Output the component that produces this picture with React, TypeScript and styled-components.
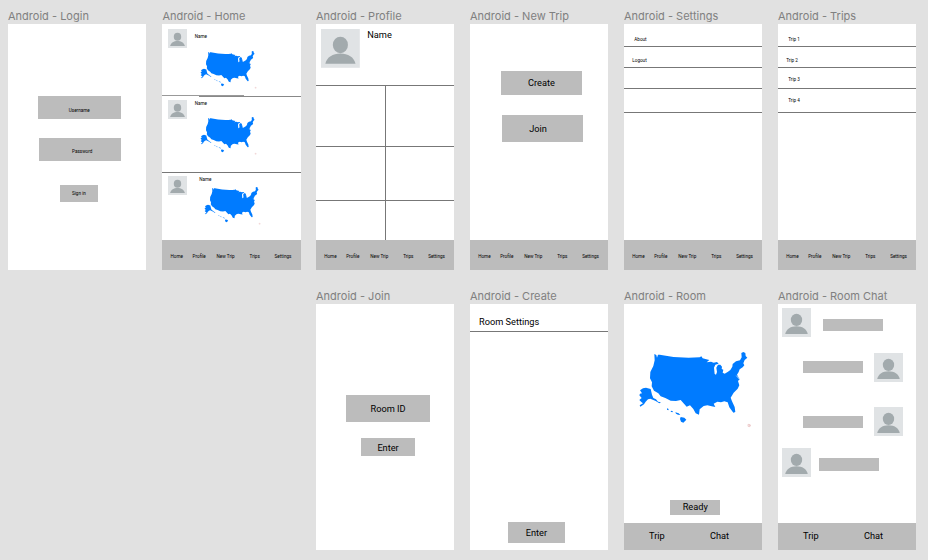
import React from "react";
import styled, { createGlobalStyle } from "styled-components";

const GlobalStyle = createGlobalStyle`
  * { box-sizing: border-box; }
  body { margin: 0; background: #e1e1e1; overflow: hidden; }
`;

const Canvas = styled.main`
  width: 928px;
  height: 560px;
  padding: 9px 0 0 8px;
  display: grid;
  grid-template-columns: 154.4px 153.6px repeat(4, 154px);
  grid-template-rows: 280px 271px;
  background: #e1e1e1;
  font-family: Roboto, "Liberation Sans", sans-serif;
  color: #000;
  overflow: hidden;
`;

const Artboard = styled.section<{ $column: number; $row: number }>`
  grid-column: ${(p) => p.$column};
  grid-row: ${(p) => p.$row};
  width: 138.4px;
`;

const Title = styled.h2`
  margin: 0;
  height: 15px;
  font: 400 11px/15px Inter, sans-serif;
  letter-spacing: 0.01px;
  color: #808080;
  white-space: nowrap;
`;

const Screen = styled.div`
  height: 246px;
  display: flex;
  flex-direction: column;
  background: #fff;
  overflow: hidden;
`;

const Body = styled.div`
  flex: 1;
  min-height: 0;
  display: flex;
  flex-direction: column;
  align-items: flex-start;
`;

const Box = styled.div<{ $w: number; $h: number; $left: number; $gap: number; $textLeft: number; $textTop: number; $small?: boolean }>`
  flex: none;
  width: ${(p) => p.$w}px;
  height: ${(p) => p.$h}px;
  margin: ${(p) => p.$gap}px 0 0 ${(p) => p.$left}px;
  padding: ${(p) => p.$textTop}px 0 0 ${(p) => p.$textLeft}px;
  background: #bcbcbc;
  font-size: ${(p) => (p.$small ? 4.62 : 9.23)}px;
  line-height: ${(p) => (p.$small ? 6 : 12)}px;
  white-space: nowrap;
`;

const TabBar = styled.nav`
  flex: none;
  height: 30px;
  padding: 3.5px 0 0 8.2px;
  display: grid;
  grid-template-columns: 22px 24px 33px 25px auto;
  align-items: center;
  background: #bcbcbc;
  font-size: 4.62px;
  line-height: 6px;
  white-space: nowrap;
`;

const RoomBar = styled.nav`
  flex: none;
  height: 27.5px;
  padding-left: 25px;
  display: grid;
  grid-template-columns: 61px auto;
  align-items: center;
  background: #bcbcbc;
  font-size: 9.23px;
  line-height: 12px;
`;

const AvatarFrame = styled.svg<{ $size: number }>`
  flex: none;
  display: block;
  width: ${(p) => p.$size}px;
  height: ${(p) => p.$size}px;
`;

const straightRule = "linear-gradient(#777, #777) 0 100% / 100% 1px no-repeat";
const tiltedRule =
  "linear-gradient(#888, #888) 100% 100% / 102px 1px no-repeat, linear-gradient(#999, #999) 0 calc(100% - 1px) / 82px 1px no-repeat";

const Post = styled.article<{ $h: number; $top: number; $rule?: string }>`
  width: 100%;
  height: ${(p) => p.$h}px;
  padding: ${(p) => p.$top}px 0 0 5.6px;
  display: flex;
  align-items: flex-start;
  background: ${(p) => p.$rule ?? "none"};
`;

const PostContent = styled.div<{ $left: number; $top: number }>`
  padding: ${(p) => p.$top}px 0 0 ${(p) => p.$left}px;
  font-size: 4.62px;
  line-height: 6px;
`;

const MapDrawing = styled.svg<{ $w: number; $left?: number; $top?: number }>`
  display: block;
  flex: none;
  width: ${(p) => p.$w}px;
  height: ${(p) => (p.$w * 240) / 345}px;
  margin: ${(p) => p.$top ?? 0}px 0 0 ${(p) => p.$left ?? 0}px;
`;

const ProfileHeader = styled.header`
  height: 61px;
  padding: 5px 0 0 5.3px;
  display: flex;
  gap: 7.2px;
  font-size: 9.23px;
  line-height: 12px;
`;

const Gallery = styled.div`
  width: 100%;
  flex: 1;
  display: grid;
  grid-template-columns: 70px 1fr;
  grid-template-rows: 61px 54px 1fr;
`;

const Photo = styled.div`
  border-top: 1px solid #777;
  &:nth-child(odd) { border-right: 1px solid #777; }
`;

const ListRow = styled.div<{ $h: number; $left: number; $top: number }>`
  width: 100%;
  height: ${(p) => p.$h}px;
  padding: ${(p) => p.$top}px 0 0 ${(p) => p.$left}px;
  border-bottom: 1px solid #777;
  font-size: 4.62px;
  line-height: 6px;
`;

const RoomHeading = styled.header`
  width: 100%;
  height: 28px;
  padding: 12px 0 0 9px;
  border-bottom: 1px solid #777;
  font-size: 9.23px;
  line-height: 12px;
`;

const Message = styled.div<{ $own?: boolean; $gap: number; $left: number; $space: number; $barTop: number }>`
  display: flex;
  flex-direction: ${(p) => (p.$own ? "row-reverse" : "row")};
  gap: ${(p) => p.$space}px;
  margin: ${(p) => p.$gap}px 0 0 ${(p) => p.$left}px;
  > div { margin-top: ${(p) => p.$barTop}px; }
`;

const MessageBar = styled.div`
  width: 60px;
  height: 12.2px;
  background: #bcbcbc;
`;

function Avatar({ size }: { size: number }) {
  return (
    <AvatarFrame $size={size} viewBox="0 0 117 117">
      <rect width="117" height="117" fill="#e0e3e5" />
      <ellipse cx="58.5" cy="48" rx="22.8" ry="25" fill="#a2aaad" />
      <path d="M13 105C17 85 36 74 58.5 74S100 85 104 105Z" fill="#a2aaad" />
    </AvatarFrame>
  );
}

function UsaMap({ w, left, top }: { w: number; left?: number; top?: number }) {
  return (
    <MapDrawing $w={w} $left={left} $top={top} viewBox="60 60 345 240">
      <g fill="#007bff">
        <path d="M109 72L115 75L117 83L120 74L125 74Q185 87 245 82L250 79L254 85L265 88L274 90L266 97L279 95L287 98L297 96L302 101L292 104L288 113L290 132L294 134L297 126L295 113L300 104L307 104L312 110L311 117L316 119L314 128L320 131L330 125L337 120L343 110L344 102L354 94L366 91L371 82L370 69L376 66L382 69L383 78L388 83L380 90L376 100L379 106L374 112L365 118L362 126L357 134L365 148L360 153L364 166L359 176L347 188L338 203L342 214L350 231L352 246L346 248L334 232L329 217L319 214L309 217L298 215L287 221L292 231L281 229L268 226L257 228L245 238L243 254L233 250L226 237L216 226L206 230L198 221L188 210L174 213L158 212L142 204L128 199L121 190L108 182L101 169L102 157L96 145L97 126L106 108L110 91Z" />
        <path d="M75 175L84 173L98 177L102 194L106 204L114 208L120 215L129 217L124 220L113 213L106 210L97 206L90 208L83 215L78 223L67 230L65 226L75 220L70 216L64 210L71 204L64 196L66 191L72 190L66 181Z" />
        <path d="M147 235L152 237L151 241L147 239ZM159 242L165 244L163 247L158 245ZM172 247L182 250L187 255L180 254L174 251ZM188 261L199 263L205 269L196 278L189 275L186 267Z" />
      </g>
      <path d="M355 137l9 10" stroke="#fff" strokeWidth="2" />
      <path d="M390 283l6 1v6l-6-1zM392 286h7" fill="none" stroke="#e8bcbc" strokeWidth="2" />
    </MapDrawing>
  );
}

const tabs = ["Home", "Profile", "New Trip", "Trips", "Settings"];
const Tabs = () => <TabBar>{tabs.map((t) => <span key={t}>{t}</span>)}</TabBar>;
const RoomTabs = () => <RoomBar><span>Trip</span><span>Chat</span></RoomBar>;

function Board({ name, column, row = 1, children, footer }: {
  name: string; column: number; row?: number; children: React.ReactNode; footer?: React.ReactNode;
}) {
  return (
    <Artboard $column={column} $row={row}>
      <Title>Android - {name}</Title>
      <Screen><Body>{children}</Body>{footer}</Screen>
    </Artboard>
  );
}

export default function App() {
  return (
    <>
      <GlobalStyle />
      <Canvas>
        <Board name="Login" column={1}>
          <Box $small $w={83.2} $h={23} $left={29.6} $gap={72} $textLeft={31.2} $textTop={12}>Username</Box>
          <Box $small $w={82} $h={23.3} $left={31} $gap={18.6} $textLeft={33} $textTop={11}>Password</Box>
          <Box $small $w={38.4} $h={16.7} $left={52} $gap={24.1} $textLeft={12} $textTop={6.3}>Sign in</Box>
        </Board>

        <Board name="Home" column={2} footer={<Tabs />}>
          <Post $h={73} $top={5} $rule={tiltedRule}>
            <Avatar size={19} />
            <PostContent $left={7.8} $top={4.5}>Name<UsaMap w={57.5} left={5.5} top={10.5} /></PostContent>
          </Post>
          <Post $h={76} $top={3} $rule={straightRule}>
            <Avatar size={19} />
            <PostContent $left={7.8} $top={1}>Name<UsaMap w={57.5} left={5.5} top={9} /></PostContent>
          </Post>
          <Post $h={67} $top={3}>
            <Avatar size={19} />
            <PostContent $left={12.3} $top={1}>Name<UsaMap w={57.5} left={4.9} top={3} /></PostContent>
          </Post>
        </Board>

        <Board name="Profile" column={3} footer={<Tabs />}>
          <ProfileHeader><Avatar size={38.8} /><span>Name</span></ProfileHeader>
          <Gallery>{[1, 2, 3, 4, 5, 6].map((n) => <Photo key={n} />)}</Gallery>
        </Board>

        <Board name="New Trip" column={4} footer={<Tabs />}>
          <Box $w={81.6} $h={24.2} $left={30.8} $gap={46.5} $textLeft={27.2} $textTop={6.3}>Create</Box>
          <Box $w={81.4} $h={27.5} $left={32} $gap={20.3} $textLeft={27.2} $textTop={8}>Join</Box>
        </Board>

        <Board name="Settings" column={5} footer={<Tabs />}>
          <ListRow $h={23} $left={10.3} $top={13}>About</ListRow>
          <ListRow $h={21} $left={8.3} $top={11}>Logout</ListRow>
          <ListRow $h={21} $left={0} $top={0} />
          <ListRow $h={24} $left={0} $top={0} />
        </Board>

        <Board name="Trips" column={6} footer={<Tabs />}>
          <ListRow $h={23} $left={10.3} $top={13}>Trip 1</ListRow>
          <ListRow $h={21} $left={8.3} $top={11}>Trip 2</ListRow>
          <ListRow $h={21} $left={10.3} $top={9}>Trip 3</ListRow>
          <ListRow $h={24} $left={10.3} $top={9}>Trip 4</ListRow>
        </Board>

        <Board name="Join" column={3} row={2}>
          <Box $w={83.2} $h={26.5} $left={30.4} $gap={91} $textLeft={24.1} $textTop={7.5}>Room ID</Box>
          <Box $w={54.7} $h={18.2} $left={44.8} $gap={16.7} $textLeft={16.6} $textTop={3.6}>Enter</Box>
        </Board>

        <Board name="Create" column={4} row={2}>
          <RoomHeading>Room Settings</RoomHeading>
          <Box $w={57.6} $h={21.5} $left={37.7} $gap={189.5} $textLeft={18} $textTop={5}>Enter</Box>
        </Board>

        <Board name="Room" column={5} row={2} footer={<RoomTabs />}>
          <UsaMap w={115} left={14} top={46} />
          <Box $w={50} $h={15} $left={46} $gap={69.7} $textLeft={12.7} $textTop={1.6}>Ready</Box>
        </Board>

        <Board name="Room Chat" column={6} row={2} footer={<RoomTabs />}>
          <Message $gap={4} $left={3.7} $space={12.8} $barTop={11}><Avatar size={29} /><MessageBar /></Message>
          <Message $own $gap={16} $left={25.2} $space={10.4} $barTop={8}><Avatar size={29} /><MessageBar /></Message>
          <Message $own $gap={25.4} $left={25.2} $space={10.4} $barTop={8.6}><Avatar size={29} /><MessageBar /></Message>
          <Message $gap={11.6} $left={3.7} $space={8.3} $barTop={10.4}><Avatar size={29} /><MessageBar /></Message>
        </Board>
      </Canvas>
    </>
  );
}
